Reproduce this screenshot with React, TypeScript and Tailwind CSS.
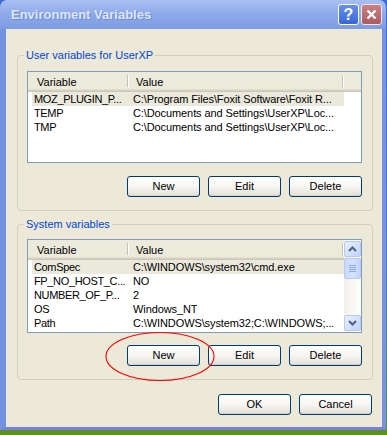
import React from "react";

function XPButton({ label }: { label: string }) {
  return (
    <button className="w-[73px] h-[21px] rounded-[3px] border border-[#003C74] bg-gradient-to-b from-[#FFFFFF] via-[#F6F5F1] to-[#E2E0D5] flex items-center justify-center text-[11px] leading-none text-black shadow-[inset_0_-1px_0_#D8D2C6]">
      {label}
    </button>
  );
}

function Sep() {
  return <div className="h-[12px] w-[2px] border-l border-r border-l-[#C5C2B2] border-r-white shrink-0" />;
}

function Header() {
  return (
    <div className="flex flex-col shrink-0">
      <div className="h-[17px] bg-[#EBEADB] flex items-start pt-[3px] leading-[14px]">
        <div className="w-[99px] pl-[9px] shrink-0">Variable</div>
        <Sep />
        <div className="w-[213px] pl-[7px] shrink-0">Value</div>
        <Sep />
        <div className="flex-1" />
      </div>
      <div className="h-[1px] bg-[#E2DECD]" />
      <div className="h-[1px] bg-[#D6D2C2]" />
      <div className="h-[1px] bg-[#CBC7B8]" />
    </div>
  );
}

function Row({ name, value, sel }: { name: string; value: string; sel?: boolean }) {
  return (
    <div className={`h-[14px] ml-[4px] w-[312px] flex items-center leading-[14px] ${sel ? "bg-[#EBE9DC]" : ""}`}>
      <div className="w-[95px] pl-[2px] whitespace-nowrap shrink-0 tracking-[-0.35px]">{name}</div>
      <div className="pl-[6px] whitespace-nowrap overflow-hidden tracking-[-0.1px]">{value}</div>
    </div>
  );
}

function SBtn({ up }: { up: boolean }) {
  return (
    <div className="h-[16px] w-[17px] rounded-[2px] border border-[#B7CAF5] bg-gradient-to-br from-[#E9F0FE] to-[#C2D3FA] flex items-center justify-center shrink-0">
      <svg width="9" height="6" viewBox="0 0 9 6">
        {up ? (
          <polyline points="1,5 4.5,1.5 8,5" fill="none" stroke="#4D6185" strokeWidth="2" />
        ) : (
          <polyline points="1,1 4.5,4.5 8,1" fill="none" stroke="#4D6185" strokeWidth="2" />
        )}
      </svg>
    </div>
  );
}

function Thumb() {
  return (
    <div className="h-[21px] w-[17px] mt-[1px] rounded-[2px] border border-[#B7CAF5] bg-gradient-to-r from-[#C9D8FC] via-[#D6E2FD] to-[#C3D4FB] flex flex-col items-center justify-center gap-[1px] shrink-0">
      <div className="w-[7px] h-[1px] bg-[#8CAAF0]" />
      <div className="w-[7px] h-[1px] bg-[#8CAAF0]" />
      <div className="w-[7px] h-[1px] bg-[#8CAAF0]" />
      <div className="w-[7px] h-[1px] bg-[#8CAAF0]" />
    </div>
  );
}

export default function App() {
  return (
    <div className="relative w-[387px] h-[435px] overflow-hidden bg-gradient-to-b from-[#3E6CD4] via-[#4B78C8] to-[#5E8F20] font-['Liberation_Sans',Arial,sans-serif] text-[11px] text-black">
      <div className="w-[386px] flex flex-col">
        {/* Title bar */}
        <div className="h-[29px] rounded-t-[7px] bg-gradient-to-b from-[#A9BFF2] via-[#8DA9E9] to-[#7E9CE3] flex items-center pl-[11px] pr-[4px]">
          <div className="flex-1 text-[13px] font-bold text-[#DDE6F8] [text-shadow:1px_1px_0_#6F8BD6] leading-none">
            Environment Variables
          </div>
          <div className="w-[21px] h-[21px] rounded-[3px] border border-white bg-gradient-to-b from-[#6690EC] to-[#3A66D6] flex items-center justify-center text-white font-bold text-[16px] leading-none">
            ?
          </div>
          <div className="w-[21px] h-[21px] ml-[2px] rounded-[3px] border border-[#F3E4E6] bg-gradient-to-b from-[#C98185] to-[#A95C62] flex items-center justify-center">
            <svg width="11" height="11" viewBox="0 0 11 11">
              <line x1="1.5" y1="1.5" x2="9.5" y2="9.5" stroke="white" strokeWidth="2.4" />
              <line x1="9.5" y1="1.5" x2="1.5" y2="9.5" stroke="white" strokeWidth="2.4" />
            </svg>
          </div>
        </div>

        {/* Body */}
        <div className="h-[401px] bg-[#ECE9D8] border-l-[6px] border-r-[4px] border-b-[3px] border-l-[#7391E1] border-r-[#7A90E0] border-b-[#7782DC] flex flex-col">
          <fieldset className="mt-[20px] ml-[11px] w-[356px] rounded-[4px] border border-[#D0D0BF] pl-[9px] pr-[10px] pt-[9px] pb-[13px]">
            <legend className="-ml-[3px] px-[2px] text-[#0046D5] leading-[13px]">User variables for UserXP</legend>
            <div className="h-[92px] w-[335px] border border-[#7F9DB9] bg-white flex flex-col">
              <Header />
              <Row name="MOZ_PLUGIN_P..." value="C:\Program Files\Foxit Software\Foxit R..." sel />
              <Row name="TEMP" value="C:\Documents and Settings\UserXP\Loc..." />
              <Row name="TMP" value="C:\Documents and Settings\UserXP\Loc..." />
            </div>
            <div className="mt-[13px] flex justify-end gap-[8px]">
              <XPButton label="New" />
              <XPButton label="Edit" />
              <XPButton label="Delete" />
            </div>
          </fieldset>

          <fieldset className="mt-[7px] ml-[11px] w-[356px] rounded-[4px] border border-[#D0D0BF] pl-[9px] pr-[10px] pt-[8px] pb-[13px]">
            <legend className="-ml-[3px] px-[2px] text-[#0046D5] leading-[13px]">System variables</legend>
            <div className="h-[94px] w-[335px] border border-[#7F9DB9] bg-white flex">
              <div className="flex-1 flex flex-col">
                <Header />
                <Row name="ComSpec" value="C:\WINDOWS\system32\cmd.exe" sel />
                <Row name="FP_NO_HOST_C..." value="NO" />
                <Row name="NUMBER_OF_P..." value="2" />
                <Row name="OS" value="Windows_NT" />
                <Row name="Path" value="C:\WINDOWS\system32;C:\WINDOWS;..." />
              </div>
              <div className="w-[17px] flex flex-col bg-gradient-to-r from-[#F3F1EC] to-[#FEFEFB] py-[1px]">
                <SBtn up />
                <Thumb />
                <div className="flex-1" />
                <SBtn up={false} />
              </div>
            </div>
            <div className="mt-[12px] flex justify-end gap-[8px]">
              <XPButton label="New" />
              <XPButton label="Edit" />
              <XPButton label="Delete" />
            </div>
          </fieldset>

          <div className="mt-[14px] ml-[11px] w-[356px] pr-[1px] flex justify-end gap-[8px]">
            <XPButton label="OK" />
            <XPButton label="Cancel" />
          </div>
        </div>
      </div>

      <svg className="absolute left-0 top-0 pointer-events-none" width="387" height="435">
        <ellipse cx="160" cy="356.5" rx="54" ry="24" fill="none" stroke="#FF0000" strokeWidth="1.1" />
      </svg>
    </div>
  );
}
